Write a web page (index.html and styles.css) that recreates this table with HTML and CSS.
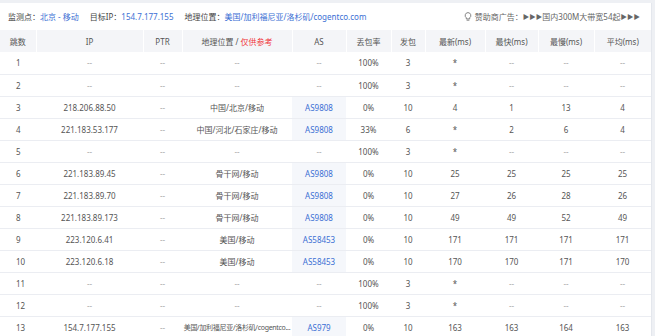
FILE: index.html
```html
<!DOCTYPE html>
<html lang="zh-CN">
<head>
<meta charset="utf-8">
<link rel="stylesheet" href="styles.css">
</head>
<body>
<div class="card">
  <div class="info">
    <div class="info-left">
      <span class="item">监测点：<span class="val">北京 - 移动</span></span>
      <span class="item">目标IP：<span class="val">154.7.177.155</span></span>
      <span class="item">地理位置：<span class="val">美国/加利福尼亚/洛杉矶/cogentco.com</span></span>
    </div>
    <div class="ad">
      <svg class="bulb" width="8" height="9" viewBox="0 0 8 9"><path d="M4 0.6a2.9 2.9 0 0 0-1.7 5.2v1.1h3.4V5.8A2.9 2.9 0 0 0 4 0.6z" fill="none" stroke="#666" stroke-width="0.8"/><path d="M2.6 8.2h2.8" stroke="#666" stroke-width="0.8"/></svg>
      <span>赞助商广告：<span class="arr">▶▶▶</span>国内300M大带宽54起<span class="arr">▶▶▶</span></span>
    </div>
  </div>
  <table class="trace">
    <colgroup>
      <col class="c1"><col class="c2"><col class="c3"><col class="c4"><col class="c5"><col class="c6"><col class="c7"><col class="c8"><col class="c9"><col class="c10"><col class="c11">
    </colgroup>
    <thead>
      <tr><th>跳数</th><th>IP</th><th>PTR</th><th>地理位置 / <span class="red">仅供参考</span></th><th>AS</th><th>丢包率</th><th>发包</th><th>最新(ms)</th><th>最快(ms)</th><th>最慢(ms)</th><th>平均(ms)</th></tr>
    </thead>
    <tbody>
      <tr><td class="hop">1</td><td class="dim">--</td><td class="dim">--</td><td class="dim">--</td><td class="dim">--</td><td>100%</td><td>3</td><td>*</td><td class="dim">--</td><td class="dim">--</td><td class="dim">--</td></tr>
      <tr><td class="hop">2</td><td class="dim">--</td><td class="dim">--</td><td class="dim">--</td><td class="dim">--</td><td>100%</td><td>3</td><td>*</td><td class="dim">--</td><td class="dim">--</td><td class="dim">--</td></tr>
      <tr><td class="hop">3</td><td>218.206.88.50</td><td class="dim">--</td><td>中国/北京/移动</td><td class="as">AS9808</td><td>0%</td><td>10</td><td>4</td><td>1</td><td>13</td><td>4</td></tr>
      <tr><td class="hop">4</td><td>221.183.53.177</td><td class="dim">--</td><td>中国/河北/石家庄/移动</td><td class="as">AS9808</td><td>33%</td><td>6</td><td>*</td><td>2</td><td>6</td><td>4</td></tr>
      <tr><td class="hop">5</td><td class="dim">--</td><td class="dim">--</td><td class="dim">--</td><td class="dim">--</td><td>100%</td><td>3</td><td>*</td><td class="dim">--</td><td class="dim">--</td><td class="dim">--</td></tr>
      <tr><td class="hop">6</td><td>221.183.89.45</td><td class="dim">--</td><td>骨干网/移动</td><td class="as">AS9808</td><td>0%</td><td>10</td><td>25</td><td>25</td><td>25</td><td>25</td></tr>
      <tr><td class="hop">7</td><td>221.183.89.70</td><td class="dim">--</td><td>骨干网/移动</td><td class="as">AS9808</td><td>0%</td><td>10</td><td>27</td><td>26</td><td>28</td><td>26</td></tr>
      <tr><td class="hop">8</td><td>221.183.89.173</td><td class="dim">--</td><td>骨干网/移动</td><td class="as">AS9808</td><td>0%</td><td>10</td><td>49</td><td>49</td><td>52</td><td>49</td></tr>
      <tr><td class="hop">9</td><td>223.120.6.41</td><td class="dim">--</td><td>美国/移动</td><td class="as">AS58453</td><td>0%</td><td>10</td><td>171</td><td>171</td><td>171</td><td>171</td></tr>
      <tr><td class="hop">10</td><td>223.120.6.18</td><td class="dim">--</td><td>美国/移动</td><td class="as">AS58453</td><td>0%</td><td>10</td><td>170</td><td>170</td><td>171</td><td>170</td></tr>
      <tr><td class="hop">11</td><td class="dim">--</td><td class="dim">--</td><td class="dim">--</td><td class="dim">--</td><td>100%</td><td>3</td><td>*</td><td class="dim">--</td><td class="dim">--</td><td class="dim">--</td></tr>
      <tr><td class="hop">12</td><td class="dim">--</td><td class="dim">--</td><td class="dim">--</td><td class="dim">--</td><td>100%</td><td>3</td><td>*</td><td class="dim">--</td><td class="dim">--</td><td class="dim">--</td></tr>
      <tr><td class="hop">13</td><td>154.7.177.155</td><td class="dim">--</td><td class="geo-long">美国/加利福尼亚/洛杉矶/cogentco...</td><td class="as">AS979</td><td>0%</td><td>10</td><td>163</td><td>163</td><td>164</td><td>163</td></tr>
    </tbody>
  </table>
</div>
</body>
</html>
```

FILE: styles.css
```css
* { box-sizing: border-box; }
html, body { margin: 0; padding: 0; }
body {
  width: 655px;
  height: 336px;
  overflow: hidden;
  background: #eef0f4;
  font-family: "Noto Sans", "Noto Sans CJK SC", sans-serif;
  font-size: 8px;
  color: #555;
}
.card {
  margin-top: 3px;
  width: 652px;
  background: #fff;
  border-right: 1px solid #e4e7ed;
}
.info {
  height: 27px;
  display: flex;
  align-items: center;
  justify-content: space-between;
  padding: 0 11px 0 8px;
  color: #444;
}
.info-left { display: flex; gap: 11px; }
.val { color: #3b6fd4; }
.ad { display: flex; align-items: center; gap: 3px; color: #666; }
.arr { font-size: 6.5px; vertical-align: 1px; }
.bulb { display: block; }
.trace {
  width: 651px;
  border-collapse: collapse;
  table-layout: fixed;
}
.c1 { width: 36px; }
.c2 { width: 107px; }
.c3 { width: 39px; }
.c4 { width: 110px; }
.c5 { width: 54px; }
.c6 { width: 45px; }
.c7 { width: 34px; }
.c8 { width: 60px; }
.c9 { width: 53px; }
.c10 { width: 56px; }
.c11 { width: 57px; }
thead tr { height: 22px; }
tbody tr { height: 22px; }
th {
  background: #f4f5f8;
  font-weight: normal;
  color: #555;
  border-left: 1px solid #fff;
  padding: 0;
  text-align: center;
}
th:first-child { border-left: none; }
.red { color: #f0373b; }
td {
  padding: 0 3px;
  text-align: center;
  border-bottom: 1px solid #ebedf2;
  white-space: nowrap;
  color: #555;
}
td.hop { text-align: left; padding-left: 16px; }
td.dim { color: #aaa; }
td.as { color: #3b6fd4; background: #f5f7fb; }
td.geo-long { padding: 0 1px; font-size: 7px; letter-spacing: -0.3px; }
```
